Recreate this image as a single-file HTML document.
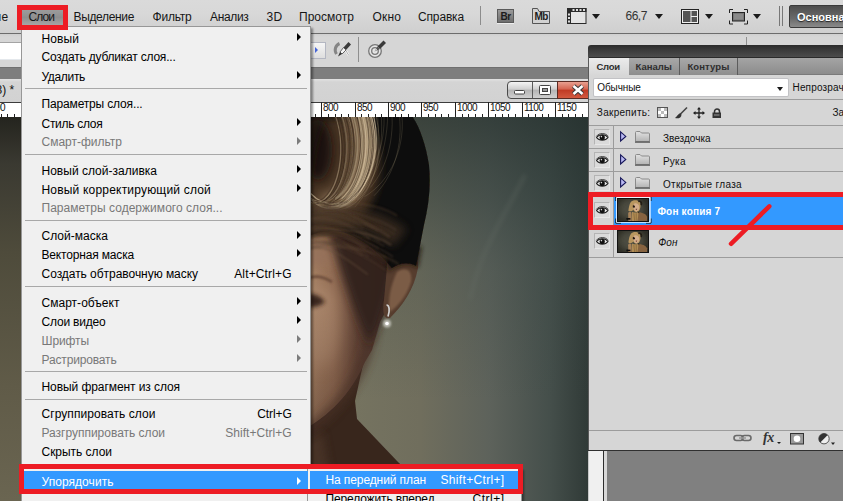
<!DOCTYPE html>
<html><head><meta charset="utf-8">
<style>
*{box-sizing:border-box;margin:0;padding:0}
html,body{width:843px;height:501px;overflow:hidden;background:#808080}
body{position:relative;font-family:"Liberation Sans",sans-serif;font-size:12px;color:#000}
.abs{position:absolute}
.t{position:absolute;white-space:nowrap}
svg{position:absolute;overflow:visible}
#menubar{left:0;top:0;width:843px;height:34px;background:linear-gradient(#dadada,#d8d8d8 40%,#cfcfcf);border-bottom:1px solid #6c6c6c}
#menubar .t{top:10px;font-size:12px;line-height:15px;color:#161616}
#optbar{left:0;top:34px;width:843px;height:33px;background:linear-gradient(#cfcfcf,#d6d6d6 3px,#d6d6d6)}
#band{left:0;top:67px;width:843px;height:12px;background:#7e7e7e;border-top:1px solid #6f6f6f}
#tabbar{left:0;top:79px;width:588px;height:23px;background:linear-gradient(#e2e2e2,#d4d4d4 3px,#d2d2d2)}
#ruler{left:0;top:102px;width:588px;height:15px;background:#fff;border-top:1px solid #3c3c3c}
#ruler .n{position:absolute;top:-0.3px;font-size:10px;line-height:10px;color:#111;letter-spacing:-0.6px}
#photo{left:0;top:117px;width:588px;height:384px;background:#3c4440;overflow:hidden}
#menu{left:21px;top:25.500px;width:290px;height:480px;background:#f0f0f0;border:1px solid #979797;box-shadow:2px 2px 2px rgba(0,0,0,.4)}
.mi{position:absolute;white-space:nowrap;font-size:12px;line-height:19px;height:19px}
.sep{position:absolute;left:3px;right:3px;height:1px;background:#a8a8a8;border-bottom:0}
.arr{position:absolute;left:275px;width:0;height:0;border-left:4px solid #000;border-top:4px solid transparent;border-bottom:4px solid transparent}
.arr.d{border-left-color:#7c7c7c}
.dd{position:absolute;width:0;height:0;border-top:5px solid #1a1a1a;border-left:4px solid transparent;border-right:4px solid transparent}
/* panel */
#panel{left:588px;top:45px;width:255px;height:406px;background:#d6d6d6;border-bottom:1px solid #303030;border-radius:3px 0 0 0;overflow:hidden}
#panel .t{font-size:10px;line-height:12px;color:#111}
#phead{left:0;top:0;width:255px;height:12px;background:linear-gradient(#2b2b2b,#3a3a3a 40%,#4c4c4c)}
#ptabs{left:0;top:12px;width:255px;height:17.600px;background:linear-gradient(#a4a4a4,#8c8c8c);border-top:1px solid #2a2a2a;border-bottom:1px solid #7a7a7a}
.ptab{position:absolute;top:0;height:17px;border-right:1px solid #5c5c5c;background:linear-gradient(#a8a8a8,#8e8e8e)}
.ptab.on{background:linear-gradient(#ebebeb,#d6d6d6);height:18px;border-right:0}
.hl{position:absolute;left:0;width:255px;height:1px;background:#9c9c9c}
.eye{position:absolute;left:5px;width:16px;height:16px;background:#dadada;border:1px solid;border-color:#b4b4b4 #e6e6e6 #e6e6e6 #b4b4b4}
.ltxt{font-size:11px}
</style></head><body>

<div id="menubar" class="abs">
<div class="t" id="mb0" style="left:-5.5px;letter-spacing:0.305px">ие</div>
<div class="abs" style="left:22px;top:10px;width:41px;height:15px;background:linear-gradient(#9c9c9c,#8e8e8e 50%,#a6a6a6)"></div>
<div class="t" id="mb1" style="left:28.5px;letter-spacing:-0.922px">Слои</div>
<div class="t" id="mb2" style="left:73.5px;letter-spacing:-0.344px">Выделение</div>
<div class="t" id="mb3" style="left:152.5px;letter-spacing:-0.219px">Фильтр</div>
<div class="t" id="mb4" style="left:210px;letter-spacing:-0.336px">Анализ</div>
<div class="t" id="mb5" style="left:266.5px;letter-spacing:0.328px">3D</div>
<div class="t" id="mb6" style="left:299px;letter-spacing:0.023px">Просмотр</div>
<div class="t" id="mb7" style="left:372.5px;letter-spacing:0.152px">Окно</div>
<div class="t" id="mb8" style="left:418px;letter-spacing:-0.154px">Справка</div>
<div class="abs" style="left:480px;top:6px;width:1px;height:19px;background:#8c8c8c"></div>
<!-- Br -->
<div class="abs" style="left:497px;top:9px;width:17px;height:14px;background:linear-gradient(#9a9a9a,#6e6e6e);border:1px solid #5a5a5a;box-shadow:0 1px 0 #eee"></div>
<div class="t" style="left:500.5px;top:9.5px;font-size:10px;line-height:13px;font-weight:bold;color:#1c1c1c;letter-spacing:-0.4px">Br</div>
<!-- Mb -->
<svg style="left:532px;top:8px" width="18" height="16"><path d="M0.5 15.5V0.5H5.5L7 3.5H17.5V15.5Z" fill="#d2d2d2" stroke="#555" stroke-width="1"/></svg>
<div class="t" style="left:534.5px;top:10px;font-size:10px;line-height:13px;font-weight:bold;color:#1c1c1c;letter-spacing:-0.6px">Mb</div>
<!-- film -->
<svg style="left:567px;top:8px" width="20" height="16"><rect x="0.5" y="0.5" width="18.5" height="15" fill="#e4e4e4" stroke="#2a2a2a"/><rect x="0" y="0" width="19.5" height="4" fill="#2a2a2a"/><rect x="0" y="0" width="4" height="16" fill="#2a2a2a"/><g fill="#ddd"><rect x="5.5" y="1" width="2" height="2"/><rect x="9" y="1" width="2" height="2"/><rect x="12.5" y="1" width="2" height="2"/><rect x="16" y="1" width="2" height="2"/><rect x="1" y="5.5" width="2" height="2"/><rect x="1" y="9" width="2" height="2"/><rect x="1" y="12.5" width="2" height="2"/></g></svg>
<div class="dd" style="left:591.5px;top:14px"></div>
<div class="t" style="left:625.5px;top:9px;font-size:12px;color:#333;letter-spacing:-0.5px">66,7</div>
<div class="dd" style="left:655px;top:14px"></div>
<!-- grid -->
<svg style="left:681px;top:8.5px" width="18" height="15"><rect x="0.5" y="0.5" width="17" height="14" fill="#f0f0f0" stroke="#222"/><rect x="2" y="2" width="7.5" height="11" fill="#555"/><rect x="10.5" y="2" width="5.5" height="5" fill="#555"/><rect x="10.5" y="8" width="5.5" height="5" fill="#555"/></svg>
<div class="dd" style="left:704.5px;top:14px"></div>
<!-- screen -->
<svg style="left:728.5px;top:8.5px" width="19" height="16"><path d="M0.5 4V0.5H4M15 0.5H18.5V4M18.5 11.5V15H15M4 15H0.5V11.5" fill="none" stroke="#222"/><rect x="3.5" y="3.5" width="12" height="8.5" fill="#777" stroke="#222"/><rect x="5" y="5" width="9" height="5.5" fill="#8a8a8a"/></svg>
<div class="dd" style="left:753px;top:14px"></div>
<div class="abs" style="left:779px;top:6px;width:1px;height:20px;background:#777"></div>
<div class="abs" style="left:782px;top:6px;width:1px;height:20px;background:#777"></div>
<div class="abs" style="left:789px;top:5px;width:60px;height:23px;background:linear-gradient(#4e4e4e,#6a6a6a 60%,#8a8a8a);border:1px solid #3a3a3a;border-radius:2px"></div>
<div class="t" style="left:797px;top:9px;font-size:11px;font-weight:bold;color:#fff;letter-spacing:0;text-shadow:0 1px 1px #222;top:10px">Основная</div>
</div>

<div id="optbar" class="abs">
<div class="abs" style="left:-2px;top:8px;width:24px;height:18px;background:#fff;border:1px solid #b4b4b4;border-top-color:#a4a4a4;border-bottom-color:#e4e8ec"></div>
<div class="abs" style="left:304px;top:7.500px;width:21.500px;height:17.500px;background:linear-gradient(#f6f6f6,#dedede);border:1.500px solid #b4b7c2"></div>
<div class="abs" style="left:315px;top:13px;width:0;height:0;border-left:3.500px solid #4665d6;border-top:3px solid transparent;border-bottom:3px solid transparent"></div>
<!-- pen icon 1 -->
<svg style="left:333px;top:7px" width="20" height="18"><path d="M6.500 2.500A7 7 0 0 0 3.500 13" fill="none" stroke="#858585" stroke-width="3"/><path d="M12 8L15.500 14" stroke="#fff" stroke-width="2"/><path d="M12 8L15.500 14" stroke="#777" stroke-width=".6"/><path d="M18 3.500L15.500 1L10.500 6.500L13 9Z" fill="#3a3a3a"/><path d="M10.500 6.500L7 11L9 13L13 9Z" fill="#f4f4f4" stroke="#444" stroke-width=".8"/><path d="M7 11L5 15.500L9 13Z" fill="#333"/></svg>
<div class="abs" style="left:358px;top:3px;width:1px;height:25px;background:#8f8f8f"></div>
<!-- target icon -->
<svg style="left:367px;top:6px" width="20" height="19"><circle cx="8" cy="11" r="6.3" fill="#e6e6e6" stroke="#777" stroke-width="1.3"/><circle cx="8" cy="11" r="3.3" fill="#e6e6e6" stroke="#777" stroke-width="1.3"/><path d="M19 3L16.500 0.500L10.500 6.500L13 9Z" fill="#3a3a3a"/><path d="M10.500 6.500L7.500 11.500L13 9Z" fill="#555"/><path d="M9.300 8.700L8 11L10 10Z" fill="#fff"/></svg>
<div class="abs" style="left:746px;top:3px;width:1px;height:10px;background:#8f8f8f"></div>
</div>
<div id="band" class="abs"></div>
<div id="tabbar" class="abs">
<div class="t" style="left:-4.5px;top:4px;font-size:12px;color:#111">8) *</div>
<!-- window buttons -->
<div class="abs" style="left:507px;top:2px;width:51px;height:18px;border:1px solid #4a4a4a;border-radius:4px 0 0 4px;background:linear-gradient(#f4f4f4,#cfcfcf 45%,#b4b4b4 50%,#d0d0d0)"></div>
<div class="abs" style="left:532px;top:3px;width:1px;height:16px;background:#5a5a5a"></div>
<div class="abs" style="left:557px;top:2px;width:31px;height:18px;border:1px solid #5a2a22;border-right:0;background:linear-gradient(#e8a090,#d46450 45%,#c03a24 50%,#d2593f)"></div>
<svg style="left:507px;top:2px" width="81" height="18"><rect x="7.5" y="9.5" width="10" height="3.5" rx="1" fill="#fff" stroke="#444" stroke-width="1"/><rect x="32.5" y="4.5" width="11" height="9" rx="1" fill="#fff" stroke="#444"/><rect x="35.5" y="7.500" width="5" height="3" fill="#999" stroke="#444"/><path d="M66.500 5L75.500 13M75.500 5L66.500 13" stroke="#3a3a3a" stroke-width="4.600"/><path d="M66.500 5L75.500 13M75.500 5L66.500 13" stroke="#fff" stroke-width="2.600"/></svg>
</div>

<div id="ruler" class="abs"><svg style="left:0;top:0" width="588" height="15" shape-rendering="crispEdges"><path d="M1.5 11V14" stroke="#222"/><path d="M7.5 11V14" stroke="#222"/><path d="M14.5 11V14" stroke="#222"/><path d="M21.5 -1V14" stroke="#222"/><path d="M27.5 11V14" stroke="#222"/><path d="M34.5 11V14" stroke="#222"/><path d="M41.5 11V14" stroke="#222"/><path d="M47.5 11V14" stroke="#222"/><path d="M54.5 -1V14" stroke="#222"/><path d="M61.5 11V14" stroke="#222"/><path d="M67.5 11V14" stroke="#222"/><path d="M74.5 11V14" stroke="#222"/><path d="M81.5 11V14" stroke="#222"/><path d="M87.5 -1V14" stroke="#222"/><path d="M94.5 11V14" stroke="#222"/><path d="M101.5 11V14" stroke="#222"/><path d="M107.5 11V14" stroke="#222"/><path d="M114.5 11V14" stroke="#222"/><path d="M121.5 -1V14" stroke="#222"/><path d="M128.5 11V14" stroke="#222"/><path d="M134.5 11V14" stroke="#222"/><path d="M141.5 11V14" stroke="#222"/><path d="M148.5 11V14" stroke="#222"/><path d="M154.5 -1V14" stroke="#222"/><path d="M161.5 11V14" stroke="#222"/><path d="M168.5 11V14" stroke="#222"/><path d="M174.5 11V14" stroke="#222"/><path d="M181.5 11V14" stroke="#222"/><path d="M188.5 -1V14" stroke="#222"/><path d="M194.5 11V14" stroke="#222"/><path d="M201.5 11V14" stroke="#222"/><path d="M208.5 11V14" stroke="#222"/><path d="M214.5 11V14" stroke="#222"/><path d="M221.5 -1V14" stroke="#222"/><path d="M228.5 11V14" stroke="#222"/><path d="M234.5 11V14" stroke="#222"/><path d="M241.5 11V14" stroke="#222"/><path d="M248.5 11V14" stroke="#222"/><path d="M254.5 -1V14" stroke="#222"/><path d="M261.5 11V14" stroke="#222"/><path d="M268.5 11V14" stroke="#222"/><path d="M274.5 11V14" stroke="#222"/><path d="M281.5 11V14" stroke="#222"/><path d="M288.5 -1V14" stroke="#222"/><path d="M295.5 11V14" stroke="#222"/><path d="M301.5 11V14" stroke="#222"/><path d="M308.5 11V14" stroke="#222"/><path d="M315.5 11V14" stroke="#222"/><path d="M321.5 -1V14" stroke="#222"/><path d="M328.5 11V14" stroke="#222"/><path d="M335.5 11V14" stroke="#222"/><path d="M341.5 11V14" stroke="#222"/><path d="M348.5 11V14" stroke="#222"/><path d="M355.5 -1V14" stroke="#222"/><path d="M361.5 11V14" stroke="#222"/><path d="M368.5 11V14" stroke="#222"/><path d="M375.5 11V14" stroke="#222"/><path d="M381.5 11V14" stroke="#222"/><path d="M388.5 -1V14" stroke="#222"/><path d="M395.5 11V14" stroke="#222"/><path d="M401.5 11V14" stroke="#222"/><path d="M408.5 11V14" stroke="#222"/><path d="M415.5 11V14" stroke="#222"/><path d="M421.5 -1V14" stroke="#222"/><path d="M428.5 11V14" stroke="#222"/><path d="M435.5 11V14" stroke="#222"/><path d="M441.5 11V14" stroke="#222"/><path d="M448.5 11V14" stroke="#222"/><path d="M455.5 -1V14" stroke="#222"/><path d="M462.5 11V14" stroke="#222"/><path d="M468.5 11V14" stroke="#222"/><path d="M475.5 11V14" stroke="#222"/><path d="M482.5 11V14" stroke="#222"/><path d="M488.5 -1V14" stroke="#222"/><path d="M495.5 11V14" stroke="#222"/><path d="M502.5 11V14" stroke="#222"/><path d="M508.5 11V14" stroke="#222"/><path d="M515.5 11V14" stroke="#222"/><path d="M522.5 -1V14" stroke="#222"/><path d="M528.5 11V14" stroke="#222"/><path d="M535.5 11V14" stroke="#222"/><path d="M542.5 11V14" stroke="#222"/><path d="M548.5 11V14" stroke="#222"/><path d="M555.5 -1V14" stroke="#222"/><path d="M562.5 11V14" stroke="#222"/><path d="M568.5 11V14" stroke="#222"/><path d="M575.5 11V14" stroke="#222"/><path d="M582.5 11V14" stroke="#222"/></svg><span class="n" style="left:-10.0px">300</span><span class="n" style="left:23.0px">350</span><span class="n" style="left:56.0px">400</span><span class="n" style="left:89.0px">450</span><span class="n" style="left:123.0px">500</span><span class="n" style="left:156.0px">550</span><span class="n" style="left:190.0px">600</span><span class="n" style="left:223.0px">650</span><span class="n" style="left:256.0px">700</span><span class="n" style="left:290.0px">750</span><span class="n" style="left:323.0px">800</span><span class="n" style="left:357.0px">850</span><span class="n" style="left:390.0px">900</span><span class="n" style="left:423.0px">950</span><span class="n" style="left:457.0px">1000</span><span class="n" style="left:490.0px">1050</span><span class="n" style="left:524.0px">1100</span><span class="n" style="left:557.0px">1150</span></div>
<div id="photo" class="abs">
<svg style="left:0;top:0" width="588" height="384" viewBox="0 117 588 384">
<defs>
<linearGradient id="bgh" x1="330" y1="0" x2="588" y2="0" gradientUnits="userSpaceOnUse"><stop offset="0" stop-color="#777561"/><stop offset=".35" stop-color="#706e5d"/><stop offset=".62" stop-color="#5d625b"/><stop offset=".85" stop-color="#454f4b"/><stop offset="1" stop-color="#303a37"/></linearGradient>
<linearGradient id="bgt" x1="0" y1="117" x2="0" y2="400" gradientUnits="userSpaceOnUse"><stop offset="0" stop-color="#25312f" stop-opacity=".72"/><stop offset=".3" stop-color="#2e3c3a" stop-opacity=".48"/><stop offset=".55" stop-color="#3a4845" stop-opacity=".25"/><stop offset="1" stop-color="#3a4845" stop-opacity="0"/></linearGradient>
<linearGradient id="lst" x1="0" y1="117" x2="0" y2="501" gradientUnits="userSpaceOnUse"><stop offset="0" stop-color="#24241e"/><stop offset=".12" stop-color="#3a3931"/><stop offset=".35" stop-color="#4e4b3b"/><stop offset=".7" stop-color="#605b48"/><stop offset="1" stop-color="#6a6551"/></linearGradient>
<linearGradient id="skin" x1="311" y1="0" x2="385" y2="0" gradientUnits="userSpaceOnUse"><stop offset="0" stop-color="#a58063"/><stop offset=".3" stop-color="#8f6a52"/><stop offset=".62" stop-color="#5f4235"/><stop offset="1" stop-color="#43302a"/></linearGradient>
<linearGradient id="fsh" x1="0" y1="300" x2="0" y2="435" gradientUnits="userSpaceOnUse"><stop offset="0" stop-color="#4a3228" stop-opacity="0"/><stop offset=".5" stop-color="#4a3228" stop-opacity=".18"/><stop offset="1" stop-color="#3e2a21" stop-opacity=".45"/></linearGradient>
<filter id="b05" filterUnits="userSpaceOnUse" x="-20" y="90" width="640" height="440"><feGaussianBlur stdDeviation=".6"/></filter>
<filter id="b1" filterUnits="userSpaceOnUse" x="-20" y="90" width="640" height="440"><feGaussianBlur stdDeviation="1.2"/></filter>
<filter id="b2" filterUnits="userSpaceOnUse" x="-20" y="90" width="640" height="440"><feGaussianBlur stdDeviation="2.2"/></filter>
<filter id="b4" filterUnits="userSpaceOnUse" x="-20" y="90" width="640" height="440"><feGaussianBlur stdDeviation="4"/></filter>
<filter id="b8" filterUnits="userSpaceOnUse" x="-20" y="90" width="640" height="440"><feGaussianBlur stdDeviation="8"/></filter>
</defs>
<rect x="0" y="117" width="588" height="384" fill="url(#bgh)"/>
<rect x="0" y="117" width="588" height="384" fill="url(#bgt)"/>
<path d="M525 175C505 215 480 250 470 300" stroke="#6a726a" stroke-width="4" fill="none" opacity=".25" filter="url(#b2)"/>
<rect x="0" y="117" width="30" height="384" fill="url(#lst)"/>
<path d="M300 380L366 352L360 378L355 401L357 419L398 462L440 501L300 501Z" fill="#38261d" filter="url(#b05)"/>
<path d="M300 445L322 432L330 475L300 480Z" fill="#4e372b" opacity=".7" filter="url(#b4)"/>
<path d="M300 225L395 240L392 300L380 322L372 350L365 362C350 395 330 415 300 432Z" fill="url(#skin)" filter="url(#b05)"/>
<ellipse cx="320" cy="325" rx="20" ry="42" fill="#b08d72" opacity=".6" filter="url(#b8)"/>
<ellipse cx="316" cy="252" rx="18" ry="16" fill="#94705a" opacity=".7" filter="url(#b4)"/>
<path d="M300 225L395 240L392 300L380 322L372 350L365 362C350 395 330 415 300 432Z" fill="url(#fsh)"/>
<path d="M372 330C366 372 340 410 305 432" stroke="#4a3026" stroke-width="10" fill="none" opacity=".7" filter="url(#b4)"/>
<path d="M328 230L402 236L396 262L387 300L379 326L369 344L360 324L351 300L343 277Z" fill="#33241e" opacity=".95" filter="url(#b4)"/>
<path d="M388 256C402 246 420 248 418 268C414 290 402 306 390 318C384 320 382 312 384 300Z" fill="#573c2f" filter="url(#b05)"/>
<path d="M397 272C405 266 413 270 411 282C407 296 398 306 390 312C387 302 391 284 397 272Z" fill="#80604a" opacity=".9" filter="url(#b1)"/>
<path d="M386 250L422 246L418 268C408 262 398 264 388 272Z" fill="#1c1410" opacity=".8" filter="url(#b2)"/>
<path d="M300 117L412.800 117C420 128 426 145 429 165C431 185 429 205 424 225C421 240 419 252 416 266C410 262 400 262 392 268C380 254 365 240 345 233C330 229 315 232 300 240Z" fill="#0e0b09" filter="url(#b05)"/>
<path d="M305 122C330 114 368 116 378 148C384 186 372 216 342 230C325 234 312 234 305 238Z" fill="#443323" filter="url(#b4)"/>
<path d="M337.3 88.6 L341.9 92.4 L346.1 97.4 L349.8 103.5 L353.0 110.6 L355.6 118.5 L357.5 127.0 L358.6 135.9 L359.0 145.0 L358.6 154.1 L357.5 163.0 L355.6 171.5 L353.0 179.4 L349.8 186.5 L346.1 192.6 L341.9 197.6 L337.3 201.4 L332.4 203.8 L327.4 204.9 L322.4 204.6 L317.5 203.0" stroke="#7a6248" stroke-width="26" fill="none" opacity=".85" filter="url(#b4)"/>
<path d="M351.2 90.4 L354.4 94.6 L357.3 99.4 L359.8 104.7 L362.0 110.5 L363.9 116.6 L365.3 123.1 L366.3 129.7 L366.9 136.5 L367.0 143.4 L366.7 150.2 L365.9 157.0 L364.8 163.5 L363.2 169.9 L361.2 175.8 L358.9 181.4 L356.2 186.5 L353.2 191.1 L349.9 195.1 L346.4 198.5 L342.7 201.2" stroke="#b9a17e" stroke-width="13" fill="none" opacity=".75" filter="url(#b2)"/>
<path d="M334.6 96.9 L337.4 100.2 L340.0 104.0 L342.4 108.3 L344.5 113.2 L346.3 118.4 L347.8 124.0 L349.0 129.8 L349.8 135.9 L350.3 142.1 L350.4 148.4 L350.2 154.7 L349.6 160.8 L348.6 166.8 L347.3 172.6 L345.7 178.1 L343.8 183.2 L341.6 187.9 L339.2 192.1 L336.5 195.7 L333.7 198.8" stroke="rgb(64, 48, 34)" stroke-width="0.6" fill="none" opacity="0.49" filter="url(#b05)"/>
<path d="M331.5 86.2 L335.5 88.8 L339.2 92.4 L342.7 96.8 L345.8 102.1 L348.6 108.0 L350.9 114.5 L352.7 121.6 L354.0 129.0 L354.8 136.6 L355.0 144.4 L354.7 152.2 L353.9 159.8 L352.5 167.2 L350.7 174.2 L348.3 180.6 L345.5 186.5 L342.4 191.7 L338.9 196.0 L335.1 199.5 L331.1 202.1" stroke="rgb(175, 156, 127)" stroke-width="1.4" fill="none" opacity="0.53" filter="url(#b05)"/>
<path d="M340.5 89.1 L344.1 92.5 L347.4 96.7 L350.5 101.6 L353.2 107.1 L355.5 113.1 L357.5 119.6 L359.0 126.5 L360.0 133.6 L360.6 140.9 L360.7 148.2 L360.3 155.6 L359.5 162.8 L358.2 169.8 L356.4 176.4 L354.3 182.7 L351.7 188.4 L348.8 193.5 L345.6 198.0 L342.1 201.8 L338.4 204.8" stroke="rgb(51, 37, 25)" stroke-width="0.8" fill="none" opacity="0.41" filter="url(#b05)"/>
<path d="M354.6 90.9 L357.7 95.1 L360.6 99.9 L363.1 105.0 L365.2 110.6 L367.0 116.5 L368.5 122.6 L369.5 129.0 L370.1 135.5 L370.3 142.1 L370.1 148.6 L369.5 155.1 L368.5 161.5 L367.1 167.6 L365.3 173.5 L363.1 179.1 L360.6 184.3 L357.8 189.0 L354.7 193.3 L351.4 197.1 L347.8 200.2" stroke="rgb(49, 36, 24)" stroke-width="0.8" fill="none" opacity="0.41" filter="url(#b05)"/>
<path d="M344.2 85.6 L349.2 90.4 L353.7 96.3 L357.7 103.4 L360.9 111.4 L363.4 120.1 L365.0 129.4 L365.8 139.0 L365.6 148.6 L364.6 158.1 L362.8 167.3 L360.1 175.8 L356.6 183.6 L352.5 190.3 L347.9 196.0 L342.7 200.4 L337.2 203.4 L331.6 204.9 L325.8 205.0 L320.1 203.6 L314.6 200.7" stroke="rgb(190, 170, 140)" stroke-width="0.8" fill="none" opacity="0.59" filter="url(#b05)"/>
<path d="M357.3 114.7 L358.7 119.2 L360.0 124.0 L360.9 128.9 L361.7 134.0 L362.1 139.1 L362.4 144.3 L362.3 149.5 L362.0 154.6 L361.4 159.7 L360.5 164.7 L359.4 169.6 L358.1 174.3 L356.5 178.7 L354.7 183.0 L352.7 186.9 L350.5 190.6 L348.2 193.9 L345.6 196.8 L343.0 199.4 L340.2 201.6" stroke="rgb(65, 49, 34)" stroke-width="1.2" fill="none" opacity="0.50" filter="url(#b05)"/>
<path d="M335.5 103.3 L338.6 108.8 L341.1 115.2 L343.2 122.2 L344.8 129.8 L345.7 137.7 L346.1 145.8 L345.8 153.9 L345.0 161.9 L343.6 169.5 L341.6 176.7 L339.1 183.2 L336.2 188.9 L332.9 193.7 L329.2 197.5 L325.3 200.2 L321.3 201.7 L317.2 202.1 L313.1 201.3 L309.1 199.3 L305.3 196.1" stroke="rgb(54, 39, 27)" stroke-width="1.2" fill="none" opacity="0.43" filter="url(#b05)"/>
<path d="M347.3 91.2 L351.3 96.6 L354.9 102.9 L357.9 110.0 L360.3 117.7 L362.0 126.0 L363.1 134.6 L363.5 143.3 L363.2 152.1 L362.2 160.8 L360.5 169.1 L358.2 176.9 L355.2 184.0 L351.8 190.4 L347.8 195.9 L343.5 200.4 L338.8 203.8 L333.9 206.1 L328.9 207.1 L323.8 206.9 L318.8 205.5" stroke="rgb(48, 34, 23)" stroke-width="1.2" fill="none" opacity="0.40" filter="url(#b05)"/>
<path d="M354.3 99.9 L356.7 104.1 L358.8 108.6 L360.7 113.5 L362.3 118.7 L363.5 124.1 L364.5 129.7 L365.2 135.4 L365.6 141.2 L365.6 147.0 L365.3 152.8 L364.7 158.6 L363.8 164.2 L362.6 169.7 L361.1 174.9 L359.3 179.8 L357.2 184.5 L354.9 188.8 L352.4 192.7 L349.6 196.2 L346.7 199.2" stroke="rgb(171, 152, 123)" stroke-width="0.7" fill="none" opacity="0.52" filter="url(#b05)"/>
<path d="M329.0 103.9 L332.4 108.5 L335.4 114.0 L337.9 120.4 L339.9 127.5 L341.3 135.2 L342.2 143.2 L342.4 151.3 L342.0 159.4 L340.9 167.3 L339.3 174.8 L337.1 181.7 L334.4 187.8 L331.3 193.0 L327.8 197.2 L324.0 200.3 L320.0 202.1 L316.0 202.8 L311.9 202.1 L308.0 200.2 L304.2 197.2" stroke="rgb(46, 33, 22)" stroke-width="1.0" fill="none" opacity="0.39" filter="url(#b05)"/>
<path d="M345.4 94.3 L349.0 98.5 L352.3 103.4 L355.3 109.0 L357.8 115.2 L359.8 121.8 L361.3 128.8 L362.3 136.1 L362.7 143.5 L362.6 150.9 L362.0 158.3 L360.8 165.5 L359.1 172.3 L356.9 178.8 L354.2 184.7 L351.1 190.1 L347.7 194.7 L343.9 198.6 L339.9 201.7 L335.6 204.0 L331.3 205.3" stroke="rgb(197, 178, 146)" stroke-width="1.4" fill="none" opacity="0.62" filter="url(#b05)"/>
<path d="M334.3 105.5 L336.5 109.5 L338.5 114.1 L340.2 119.1 L341.7 124.4 L342.8 130.0 L343.6 135.9 L344.1 141.9 L344.2 147.9 L344.0 153.9 L343.5 159.9 L342.6 165.7 L341.5 171.3 L340.0 176.6 L338.2 181.5 L336.2 186.0 L333.9 190.0 L331.5 193.5 L328.8 196.4 L326.0 198.7 L323.1 200.4" stroke="rgb(43, 31, 20)" stroke-width="0.9" fill="none" opacity="0.37" filter="url(#b05)"/>
<path d="M343.5 104.3 L346.6 109.7 L349.2 115.9 L351.3 122.6 L353.0 129.7 L354.0 137.2 L354.6 144.9 L354.5 152.6 L353.9 160.3 L352.7 167.7 L351.0 174.8 L348.8 181.4 L346.1 187.5 L343.0 192.8 L339.5 197.3 L335.8 200.9 L331.8 203.7 L327.6 205.4 L323.3 206.1 L319.1 205.7 L314.9 204.4" stroke="rgb(46, 33, 22)" stroke-width="1.3" fill="none" opacity="0.39" filter="url(#b05)"/>
<path d="M341.9 81.6 L347.5 84.8 L352.7 89.5 L357.5 95.5 L361.6 102.5 L365.1 110.6 L367.7 119.4 L369.5 128.8 L370.4 138.5 L370.4 148.3 L369.5 158.0 L367.7 167.4 L365.1 176.2 L361.6 184.2 L357.5 191.3 L352.7 197.3 L347.5 201.9 L341.9 205.2 L336.0 207.1 L330.1 207.4 L324.2 206.2" stroke="rgb(49, 35, 24)" stroke-width="0.7" fill="none" opacity="0.40" filter="url(#b05)"/>
<path d="M326.6 96.4 L329.7 98.7 L332.7 101.8 L335.5 105.5 L338.0 109.8 L340.2 114.7 L342.1 120.0 L343.7 125.8 L344.8 131.8 L345.6 138.1 L346.0 144.6 L346.0 151.0 L345.5 157.4 L344.7 163.7 L343.4 169.7 L341.8 175.4 L339.9 180.7 L337.6 185.5 L335.0 189.7 L332.2 193.3 L329.2 196.2" stroke="rgb(56, 41, 29)" stroke-width="0.6" fill="none" opacity="0.45" filter="url(#b05)"/>
<path d="M351.9 82.2 L355.7 86.1 L359.3 90.6 L362.6 95.8 L365.5 101.6 L367.9 107.8 L369.9 114.5 L371.4 121.4 L372.5 128.6 L373.0 136.0 L373.0 143.4 L372.5 150.7 L371.5 158.0 L370.0 164.9 L368.0 171.6 L365.6 177.9 L362.7 183.6 L359.5 188.8 L355.9 193.4 L352.0 197.3 L347.9 200.5" stroke="rgb(210, 190, 158)" stroke-width="1.4" fill="none" opacity="0.67" filter="url(#b05)"/>
<path d="M337.1 89.6 L341.7 93.9 L345.8 99.5 L349.4 106.1 L352.3 113.7 L354.6 122.0 L356.1 130.9 L356.8 140.1 L356.7 149.3 L355.8 158.4 L354.1 167.2 L351.7 175.4 L348.6 182.8 L344.9 189.2 L340.7 194.5 L336.1 198.5 L331.2 201.2 L326.1 202.4 L321.0 202.2 L315.9 200.5 L311.1 197.5" stroke="rgb(52, 38, 25)" stroke-width="0.6" fill="none" opacity="0.42" filter="url(#b05)"/>
<path d="M359.2 86.5 L364.1 93.1 L368.3 100.8 L371.7 109.4 L374.2 118.7 L375.8 128.5 L376.3 138.6 L375.9 148.6 L374.4 158.5 L372.0 167.9 L368.7 176.5 L364.5 184.3 L359.7 191.1 L354.2 196.5 L348.2 200.6 L341.9 203.3 L335.5 204.4 L328.9 203.9 L322.6 201.9 L316.4 198.4 L310.7 193.5" stroke="rgb(215, 195, 162)" stroke-width="1.2" fill="none" opacity="0.69" filter="url(#b05)"/>
<path d="M342.6 109.1 L344.6 113.8 L346.3 118.9 L347.7 124.3 L348.8 130.0 L349.6 135.9 L350.0 141.8 L350.1 147.8 L349.8 153.8 L349.2 159.7 L348.2 165.5 L346.9 171.0 L345.3 176.3 L343.5 181.2 L341.3 185.7 L338.9 189.7 L336.3 193.2 L333.5 196.3 L330.6 198.7 L327.5 200.5 L324.3 201.7" stroke="rgb(52, 38, 26)" stroke-width="1.2" fill="none" opacity="0.42" filter="url(#b05)"/>
<path d="M351.5 77.4 L357.1 81.5 L362.2 86.9 L366.8 93.4 L370.8 100.8 L374.0 109.0 L376.5 117.9 L378.2 127.3 L379.0 136.9 L379.0 146.6 L378.1 156.2 L376.3 165.6 L373.8 174.4 L370.5 182.6 L366.4 189.9 L361.8 196.3 L356.7 201.6 L351.1 205.7 L345.2 208.4 L339.1 209.9 L333.0 210.0" stroke="rgb(171, 152, 123)" stroke-width="0.6" fill="none" opacity="0.52" filter="url(#b05)"/>
<path d="M328.8 102.9 L332.0 108.0 L334.8 114.0 L337.1 120.9 L338.9 128.5 L340.1 136.5 L340.7 144.9 L340.7 153.3 L340.0 161.7 L338.8 169.7 L336.9 177.2 L334.6 184.0 L331.7 190.0 L328.5 195.0 L324.9 198.8 L321.0 201.5 L317.1 202.8 L313.0 202.9 L309.1 201.6 L305.2 199.1 L301.6 195.3" stroke="rgb(176, 157, 127)" stroke-width="1.4" fill="none" opacity="0.53" filter="url(#b05)"/>
<path d="M341.8 102.6 L345.0 108.5 L347.7 115.2 L349.8 122.5 L351.3 130.3 L352.2 138.4 L352.4 146.6 L352.0 154.9 L350.9 162.9 L349.2 170.5 L346.9 177.6 L344.0 184.1 L340.7 189.7 L337.0 194.3 L332.9 197.9 L328.6 200.4 L324.1 201.7 L319.6 201.8 L315.1 200.7 L310.8 198.4 L306.7 195.0" stroke="rgb(185, 166, 136)" stroke-width="1.0" fill="none" opacity="0.57" filter="url(#b05)"/>
<path d="M357.0 99.9 L359.9 106.5 L362.3 113.8 L364.1 121.5 L365.4 129.6 L366.0 137.9 L365.9 146.3 L365.3 154.6 L364.0 162.6 L362.2 170.4 L359.7 177.6 L356.8 184.2 L353.3 190.1 L349.5 195.2 L345.3 199.3 L340.8 202.5 L336.1 204.7 L331.3 205.8 L326.5 205.8 L321.7 204.7 L317.0 202.5" stroke="rgb(172, 154, 124)" stroke-width="0.7" fill="none" opacity="0.52" filter="url(#b05)"/>
<path d="M350.4 87.7 L355.6 93.5 L360.2 100.5 L364.1 108.6 L367.1 117.6 L369.1 127.2 L370.2 137.2 L370.3 147.3 L369.5 157.4 L367.6 167.1 L364.8 176.2 L361.1 184.5 L356.6 191.7 L351.5 197.8 L345.9 202.5 L339.9 205.7 L333.6 207.3 L327.3 207.3 L321.0 205.8 L314.9 202.6 L309.3 198.0" stroke="rgb(196, 177, 145)" stroke-width="0.7" fill="none" opacity="0.62" filter="url(#b05)"/>
<path d="M338.3 117.5 L340.5 123.6 L342.3 130.3 L343.5 137.3 L344.2 144.7 L344.4 152.1 L344.0 159.5 L343.0 166.8 L341.5 173.6 L339.5 180.1 L337.1 185.9 L334.2 191.0 L331.0 195.3 L327.4 198.7 L323.7 201.2 L319.8 202.6 L315.9 203.0 L312.0 202.3 L308.1 200.5 L304.4 197.8 L301.0 194.1" stroke="rgb(65, 48, 34)" stroke-width="0.9" fill="none" opacity="0.49" filter="url(#b05)"/>
<path d="M346.1 93.1 L350.2 99.2 L353.8 106.3 L356.6 114.2 L358.8 122.8 L360.1 131.8 L360.7 141.1 L360.4 150.4 L359.3 159.6 L357.4 168.3 L354.7 176.5 L351.4 183.8 L347.4 190.2 L343.0 195.5 L338.1 199.6 L332.9 202.4 L327.5 203.8 L322.0 203.8 L316.7 202.3 L311.5 199.5 L306.6 195.4" stroke="rgb(65, 49, 34)" stroke-width="1.3" fill="none" opacity="0.50" filter="url(#b05)"/>
<path d="M355.7 91.1 L358.9 95.9 L361.8 101.3 L364.3 107.2 L366.4 113.4 L368.0 120.1 L369.2 126.9 L369.9 134.0 L370.1 141.1 L369.8 148.2 L369.1 155.3 L367.9 162.1 L366.2 168.7 L364.0 175.0 L361.5 180.8 L358.6 186.1 L355.3 190.9 L351.7 195.0 L347.9 198.5 L343.8 201.2 L339.6 203.2" stroke="rgb(173, 154, 124)" stroke-width="0.7" fill="none" opacity="0.52" filter="url(#b05)"/>
<path d="M354.2 82.3 L359.4 88.5 L364.1 95.9 L367.9 104.4 L370.9 113.8 L373.0 123.9 L374.1 134.3 L374.2 145.0 L373.3 155.5 L371.4 165.6 L368.6 175.2 L364.9 183.9 L360.5 191.6 L355.3 198.0 L349.6 203.0 L343.5 206.6 L337.2 208.5 L330.7 208.8 L324.3 207.5 L318.1 204.5 L312.2 200.0" stroke="rgb(182, 163, 133)" stroke-width="1.0" fill="none" opacity="0.56" filter="url(#b05)"/>
<path d="M349.9 107.0 L351.9 111.5 L353.6 116.3 L355.0 121.4 L356.2 126.7 L357.0 132.2 L357.6 137.7 L357.8 143.4 L357.7 149.1 L357.3 154.7 L356.6 160.2 L355.5 165.6 L354.2 170.8 L352.6 175.7 L350.7 180.3 L348.6 184.6 L346.2 188.6 L343.6 192.1 L340.9 195.1 L338.0 197.7 L334.9 199.8" stroke="rgb(168, 150, 120)" stroke-width="1.2" fill="none" opacity="0.51" filter="url(#b05)"/>
<path d="M334.9 84.7 L339.8 87.8 L344.4 92.1 L348.6 97.7 L352.3 104.2 L355.4 111.7 L357.9 119.9 L359.6 128.7 L360.5 137.8 L360.7 147.0 L360.1 156.2 L358.7 165.1 L356.6 173.6 L353.8 181.4 L350.4 188.4 L346.4 194.5 L342.0 199.4 L337.2 203.1 L332.1 205.5 L326.9 206.5 L321.7 206.2" stroke="rgb(57, 42, 29)" stroke-width="0.8" fill="none" opacity="0.45" filter="url(#b05)"/>
<path d="M351.5 86.6 L355.8 92.0 L359.7 98.3 L363.1 105.4 L365.8 113.3 L367.9 121.7 L369.2 130.4 L369.8 139.5 L369.7 148.5 L368.9 157.5 L367.3 166.2 L365.0 174.4 L362.1 182.0 L358.5 188.9 L354.5 194.9 L349.9 199.9 L345.1 203.8 L339.9 206.6 L334.6 208.2 L329.1 208.5 L323.7 207.6" stroke="rgb(178, 159, 129)" stroke-width="1.0" fill="none" opacity="0.54" filter="url(#b05)"/>
<path d="M355.2 97.3 L358.6 104.2 L361.5 111.9 L363.7 120.2 L365.2 129.0 L366.0 138.1 L366.1 147.2 L365.4 156.3 L363.9 165.1 L361.8 173.5 L359.0 181.3 L355.6 188.3 L351.7 194.4 L347.3 199.5 L342.5 203.5 L337.5 206.3 L332.3 207.8 L327.0 208.0 L321.7 206.9 L316.6 204.6 L311.7 201.0" stroke="rgb(208, 189, 156)" stroke-width="0.8" fill="none" opacity="0.67" filter="url(#b05)"/>
<path d="M345.8 95.4 L348.8 99.1 L351.5 103.3 L354.0 108.0 L356.2 113.1 L358.1 118.6 L359.6 124.4 L360.7 130.4 L361.5 136.6 L361.8 142.9 L361.8 149.3 L361.4 155.6 L360.6 161.8 L359.4 167.8 L357.9 173.6 L356.0 179.1 L353.8 184.1 L351.2 188.8 L348.4 192.9 L345.4 196.5 L342.2 199.5" stroke="rgb(56, 41, 29)" stroke-width="0.7" fill="none" opacity="0.45" filter="url(#b05)"/>
<path d="M354.0 98.4 L356.6 103.0 L358.9 108.1 L360.9 113.5 L362.5 119.3 L363.8 125.3 L364.8 131.6 L365.4 137.9 L365.6 144.4 L365.4 150.8 L364.9 157.2 L364.0 163.4 L362.8 169.5 L361.2 175.3 L359.2 180.8 L357.0 185.9 L354.5 190.7 L351.7 194.9 L348.7 198.6 L345.5 201.8 L342.1 204.4" stroke="rgb(203, 183, 151)" stroke-width="1.4" fill="none" opacity="0.64" filter="url(#b05)"/>
<path d="M343.4 111.7 L345.0 116.2 L346.4 120.9 L347.6 125.8 L348.5 131.0 L349.1 136.3 L349.5 141.7 L349.7 147.1 L349.6 152.6 L349.2 158.0 L348.5 163.3 L347.7 168.5 L346.5 173.4 L345.2 178.2 L343.6 182.6 L341.8 186.8 L339.8 190.6 L337.7 194.0 L335.4 197.0 L333.0 199.5 L330.4 201.6" stroke="rgb(59, 44, 30)" stroke-width="1.0" fill="none" opacity="0.46" filter="url(#b05)"/>
<path d="M340.2 102.0 L343.1 106.5 L345.7 111.6 L347.9 117.2 L349.7 123.2 L351.0 129.6 L351.9 136.2 L352.4 143.0 L352.3 149.8 L351.8 156.6 L350.8 163.2 L349.4 169.5 L347.5 175.5 L345.3 181.0 L342.6 186.0 L339.7 190.4 L336.4 194.2 L332.9 197.2 L329.3 199.4 L325.5 200.8 L321.6 201.4" stroke="rgb(45, 32, 21)" stroke-width="0.9" fill="none" opacity="0.38" filter="url(#b05)"/>
<path d="M359.3 109.1 L360.8 113.8 L362.1 118.8 L363.2 123.9 L363.9 129.1 L364.4 134.5 L364.7 139.9 L364.7 145.3 L364.4 150.7 L363.8 156.0 L363.0 161.2 L361.9 166.3 L360.5 171.2 L358.9 175.9 L357.1 180.3 L355.1 184.5 L352.8 188.3 L350.4 191.8 L347.8 195.0 L345.0 197.7 L342.2 200.1" stroke="rgb(58, 43, 30)" stroke-width="0.6" fill="none" opacity="0.46" filter="url(#b05)"/>
<path d="M360.1 99.1 L362.4 104.5 L364.4 110.2 L366.0 116.3 L367.3 122.6 L368.2 129.2 L368.6 135.8 L368.7 142.5 L368.4 149.1 L367.7 155.7 L366.7 162.1 L365.2 168.3 L363.4 174.2 L361.2 179.8 L358.8 185.0 L356.0 189.7 L352.9 194.0 L349.7 197.6 L346.2 200.8 L342.5 203.2 L338.8 205.1" stroke="rgb(54, 39, 27)" stroke-width="1.3" fill="none" opacity="0.43" filter="url(#b05)"/>
<path d="M344.9 89.8 L347.9 93.5 L350.7 97.8 L353.3 102.7 L355.5 108.0 L357.4 113.7 L359.0 119.8 L360.1 126.1 L360.9 132.6 L361.3 139.2 L361.4 145.9 L361.0 152.5 L360.2 159.0 L359.0 165.3 L357.5 171.4 L355.6 177.1 L353.3 182.4 L350.8 187.3 L348.0 191.7 L345.0 195.4 L341.7 198.6" stroke="rgb(202, 182, 150)" stroke-width="1.1" fill="none" opacity="0.64" filter="url(#b05)"/>
<path d="M350.6 87.6 L354.4 92.4 L357.8 97.9 L360.8 104.1 L363.4 110.8 L365.4 118.1 L366.9 125.7 L367.9 133.6 L368.3 141.6 L368.2 149.6 L367.5 157.6 L366.2 165.4 L364.4 172.8 L362.0 179.8 L359.2 186.2 L356.0 192.0 L352.4 197.1 L348.4 201.5 L344.2 204.9 L339.7 207.5 L335.1 209.0" stroke="rgb(183, 164, 133)" stroke-width="1.3" fill="none" opacity="0.56" filter="url(#b05)"/>
<path d="M328.3 95.4 L331.5 97.8 L334.6 100.8 L337.4 104.5 L340.0 108.8 L342.3 113.6 L344.3 118.9 L345.9 124.6 L347.1 130.7 L348.0 136.9 L348.5 143.3 L348.5 149.8 L348.2 156.2 L347.4 162.5 L346.3 168.6 L344.8 174.4 L342.9 179.8 L340.7 184.7 L338.2 189.2 L335.4 193.1 L332.4 196.3" stroke="rgb(51, 37, 25)" stroke-width="0.8" fill="none" opacity="0.42" filter="url(#b05)"/>
<path d="M335.9 96.7 L338.7 99.8 L341.4 103.4 L343.8 107.4 L345.9 112.0 L347.8 116.9 L349.4 122.2 L350.7 127.7 L351.6 133.5 L352.1 139.4 L352.4 145.4 L352.2 151.4 L351.7 157.3 L350.9 163.1 L349.7 168.7 L348.2 174.1 L346.4 179.1 L344.3 183.7 L342.0 187.9 L339.4 191.6 L336.6 194.8" stroke="rgb(54, 39, 27)" stroke-width="0.6" fill="none" opacity="0.43" filter="url(#b05)"/>
<path d="M339.9 78.3 L345.8 82.0 L351.2 87.2 L356.1 93.9 L360.2 101.9 L363.6 111.0 L366.0 120.9 L367.5 131.3 L368.0 142.0 L367.4 152.7 L365.8 163.0 L363.3 172.8 L359.8 181.8 L355.6 189.7 L350.7 196.2 L345.2 201.4 L339.3 204.9 L333.1 206.6 L326.9 206.7 L320.7 205.0 L314.8 201.6" stroke="rgb(171, 152, 123)" stroke-width="1.0" fill="none" opacity="0.52" filter="url(#b05)"/>
<path d="M349.8 81.8 L355.1 87.2 L359.9 94.0 L363.9 101.8 L367.2 110.6 L369.7 120.2 L371.2 130.3 L371.8 140.6 L371.4 151.0 L370.1 161.1 L367.8 170.8 L364.7 179.8 L360.8 187.8 L356.2 194.8 L351.0 200.5 L345.3 204.8 L339.3 207.7 L333.1 208.9 L326.9 208.5 L320.7 206.6 L314.9 203.1" stroke="rgb(196, 177, 146)" stroke-width="1.1" fill="none" opacity="0.62" filter="url(#b05)"/>
<path d="M345.7 105.5 L347.8 110.0 L349.7 114.9 L351.2 120.2 L352.5 125.7 L353.4 131.3 L353.9 137.2 L354.2 143.1 L354.1 149.0 L353.6 154.9 L352.8 160.6 L351.7 166.2 L350.3 171.5 L348.6 176.5 L346.5 181.2 L344.3 185.5 L341.8 189.3 L339.0 192.7 L336.1 195.5 L333.1 197.7 L329.9 199.4" stroke="rgb(51, 37, 25)" stroke-width="0.7" fill="none" opacity="0.42" filter="url(#b05)"/>
<path d="M349.5 83.7 L354.2 87.9 L358.6 93.0 L362.4 99.1 L365.7 106.0 L368.5 113.5 L370.5 121.5 L371.9 130.0 L372.6 138.6 L372.5 147.3 L371.7 155.9 L370.2 164.3 L368.1 172.3 L365.2 179.7 L361.8 186.5 L357.9 192.4 L353.5 197.4 L348.7 201.4 L343.7 204.3 L338.4 206.1 L333.0 206.7" stroke="rgb(55, 40, 28)" stroke-width="1.0" fill="none" opacity="0.44" filter="url(#b05)"/>
<path d="M347.0 120.2 L348.4 125.0 L349.6 129.9 L350.5 135.0 L351.1 140.3 L351.4 145.6 L351.5 151.0 L351.2 156.4 L350.7 161.7 L349.9 166.9 L348.9 171.9 L347.5 176.7 L346.0 181.2 L344.2 185.4 L342.2 189.3 L340.0 192.8 L337.6 195.9 L335.0 198.6 L332.4 200.8 L329.6 202.4 L326.8 203.6" stroke="rgb(57, 42, 29)" stroke-width="0.6" fill="none" opacity="0.45" filter="url(#b05)"/>
<path d="M328.1 89.0 L332.3 90.9 L336.2 93.9 L339.9 97.9 L343.3 102.8 L346.3 108.4 L348.9 114.8 L350.9 121.8 L352.5 129.2 L353.4 137.0 L353.8 144.9 L353.6 152.8 L352.8 160.7 L351.5 168.2 L349.6 175.3 L347.2 181.9 L344.4 187.9 L341.1 193.0 L337.5 197.3 L333.6 200.6 L329.5 202.9" stroke="rgb(48, 34, 23)" stroke-width="0.9" fill="none" opacity="0.40" filter="url(#b05)"/>
<path d="M329.4 106.2 L332.1 111.0 L334.5 116.7 L336.4 122.9 L337.9 129.7 L339.0 136.9 L339.5 144.3 L339.6 151.8 L339.1 159.3 L338.2 166.5 L336.7 173.4 L334.9 179.8 L332.6 185.5 L329.9 190.6 L327.0 194.7 L323.8 198.0 L320.4 200.3 L316.8 201.6 L313.3 201.8 L309.7 200.9 L306.3 199.0" stroke="rgb(62, 46, 33)" stroke-width="1.2" fill="none" opacity="0.48" filter="url(#b05)"/>
<path d="M362.4 95.8 L365.8 102.0 L368.7 108.9 L371.0 116.3 L372.7 124.1 L373.7 132.2 L374.0 140.4 L373.7 148.6 L372.7 156.6 L371.1 164.5 L368.8 171.9 L365.9 178.8 L362.5 185.1 L358.6 190.7 L354.3 195.4 L349.6 199.3 L344.7 202.2 L339.5 204.2 L334.3 205.1 L329.0 205.0 L323.7 203.8" stroke="rgb(49, 35, 23)" stroke-width="1.3" fill="none" opacity="0.40" filter="url(#b05)"/>
<path d="M357.8 89.7 L361.9 95.0 L365.5 101.1 L368.6 107.8 L371.1 115.1 L373.0 122.9 L374.3 130.9 L374.9 139.2 L374.8 147.5 L374.0 155.7 L372.5 163.6 L370.4 171.3 L367.7 178.4 L364.4 185.0 L360.7 190.8 L356.4 195.8 L351.8 200.0 L346.9 203.2 L341.8 205.5 L336.5 206.6 L331.2 206.8" stroke="rgb(210, 190, 158)" stroke-width="1.2" fill="none" opacity="0.67" filter="url(#b05)"/>
<path d="M346.5 81.9 L350.7 85.0 L354.6 89.0 L358.2 93.6 L361.5 98.8 L364.4 104.6 L366.9 111.0 L368.9 117.7 L370.4 124.8 L371.4 132.1 L372.0 139.6 L372.0 147.1 L371.4 154.6 L370.4 161.9 L368.9 169.0 L366.8 175.7 L364.4 182.0 L361.5 187.8 L358.2 193.1 L354.6 197.7 L350.7 201.6" stroke="rgb(53, 39, 27)" stroke-width="0.9" fill="none" opacity="0.43" filter="url(#b05)"/>
<path d="M337.0 110.2 L339.2 115.0 L341.1 120.3 L342.6 126.0 L343.9 132.1 L344.7 138.4 L345.2 144.8 L345.2 151.3 L344.9 157.8 L344.2 164.1 L343.1 170.3 L341.7 176.1 L339.9 181.6 L337.8 186.5 L335.4 191.0 L332.7 194.8 L329.9 198.0 L326.9 200.5 L323.7 202.2 L320.5 203.2 L317.3 203.3" stroke="rgb(43, 31, 20)" stroke-width="1.2" fill="none" opacity="0.37" filter="url(#b05)"/>
<path d="M358.3 100.1 L360.9 105.0 L363.1 110.4 L365.1 116.1 L366.6 122.1 L367.7 128.4 L368.4 134.8 L368.8 141.2 L368.6 147.7 L368.1 154.1 L367.1 160.5 L365.8 166.6 L364.0 172.4 L361.9 178.0 L359.5 183.1 L356.7 187.8 L353.6 192.0 L350.3 195.7 L346.7 198.8 L343.0 201.3 L339.1 203.1" stroke="rgb(50, 36, 24)" stroke-width="0.8" fill="none" opacity="0.41" filter="url(#b05)"/>
<path d="M347.7 88.1 L352.1 92.7 L356.0 98.1 L359.5 104.4 L362.4 111.4 L364.7 118.9 L366.4 126.9 L367.4 135.2 L367.8 143.6 L367.4 152.0 L366.4 160.3 L364.7 168.3 L362.4 175.8 L359.5 182.8 L356.1 189.1 L352.1 194.6 L347.8 199.2 L343.1 202.8 L338.2 205.4 L333.1 206.9 L327.9 207.3" stroke="rgb(190, 171, 140)" stroke-width="1.2" fill="none" opacity="0.59" filter="url(#b05)"/>
<path d="M353.7 100.7 L356.1 105.7 L358.2 111.2 L360.0 116.9 L361.4 123.0 L362.4 129.3 L363.0 135.7 L363.2 142.2 L363.0 148.7 L362.3 155.2 L361.3 161.4 L360.0 167.5 L358.2 173.3 L356.1 178.7 L353.7 183.7 L350.9 188.2 L347.9 192.2 L344.7 195.6 L341.3 198.4 L337.7 200.6 L334.0 202.1" stroke="rgb(178, 159, 129)" stroke-width="0.6" fill="none" opacity="0.54" filter="url(#b05)"/>
<path d="M326.5 101.3 L329.7 104.8 L332.7 109.2 L335.3 114.4 L337.6 120.3 L339.4 126.8 L340.7 133.7 L341.6 140.9 L342.0 148.4 L341.8 155.8 L341.2 163.1 L340.1 170.2 L338.5 176.9 L336.4 183.1 L334.0 188.6 L331.2 193.4 L328.0 197.4 L324.7 200.4 L321.2 202.5 L317.5 203.6 L313.9 203.7" stroke="rgb(57, 42, 29)" stroke-width="1.0" fill="none" opacity="0.45" filter="url(#b05)"/>
<path d="M323.9 93.0 L327.8 95.1 L331.6 98.4 L335.1 102.7 L338.3 108.0 L341.0 114.2 L343.3 121.1 L344.9 128.6 L346.1 136.5 L346.6 144.6 L346.5 152.8 L345.8 160.9 L344.5 168.7 L342.7 176.0 L340.3 182.7 L337.5 188.7 L334.2 193.8 L330.6 197.8 L326.8 200.8 L322.8 202.6 L318.6 203.3" stroke="rgb(173, 154, 124)" stroke-width="1.4" fill="none" opacity="0.52" filter="url(#b05)"/>
<path d="M344.7 99.3 L347.4 103.4 L349.7 107.9 L351.8 112.8 L353.6 118.1 L355.0 123.6 L356.1 129.4 L356.9 135.4 L357.2 141.4 L357.2 147.5 L356.8 153.6 L356.1 159.5 L355.0 165.3 L353.5 170.8 L351.7 176.1 L349.6 181.0 L347.2 185.5 L344.6 189.6 L341.7 193.1 L338.6 196.1 L335.4 198.6" stroke="rgb(169, 151, 121)" stroke-width="1.4" fill="none" opacity="0.51" filter="url(#b05)"/>
<path d="M329.0 97.6 L333.1 101.6 L336.8 106.8 L340.1 113.1 L342.7 120.4 L344.8 128.4 L346.1 136.9 L346.7 145.8 L346.6 154.7 L345.7 163.5 L344.1 171.9 L341.9 179.7 L339.0 186.6 L335.6 192.6 L331.7 197.4 L327.5 200.9 L323.0 203.0 L318.4 203.6 L313.9 202.9 L309.4 200.6 L305.2 197.1" stroke="rgb(59, 44, 30)" stroke-width="0.6" fill="none" opacity="0.46" filter="url(#b05)"/>
<path d="M372.9 72.5 L375.7 78.2 L378.1 84.3 L380.1 90.7 L381.7 97.2 L382.9 103.9 L383.7 110.8 L384.0 117.7 L384.0 124.6 L383.4 131.4 L382.5 138.2 L381.2 144.9 L379.4 151.4 L377.2 157.6 L374.7 163.6 L371.8 169.3 L368.6 174.6 L365.0 179.5 L361.2 183.9 L357.1 187.9 L352.7 191.4" stroke="#a8987a" stroke-width=".6" fill="none" opacity=".35"/>
<path d="M376.5 103.8 L377.2 109.1 L377.7 114.4 L378.0 119.8 L378.2 125.2 L378.2 130.6 L377.9 136.0 L377.5 141.4 L377.0 146.7 L376.2 152.0 L375.3 157.1 L374.2 162.2 L372.9 167.1 L371.5 171.9 L369.9 176.5 L368.1 180.9 L366.3 185.1 L364.2 189.2 L362.1 193.0 L359.8 196.5 L357.4 199.8" stroke="#a8987a" stroke-width=".6" fill="none" opacity=".35"/>
<path d="M393.9 85.3 L396.3 91.1 L398.4 97.2 L400.0 103.4 L401.2 109.8 L402.0 116.3 L402.3 122.8 L402.2 129.3 L401.6 135.8 L400.6 142.2 L399.2 148.5 L397.3 154.6 L395.0 160.6 L392.4 166.3 L389.3 171.7 L385.9 176.8 L382.2 181.6 L378.1 186.0 L373.8 190.0 L369.2 193.6 L364.4 196.7" stroke="#a8987a" stroke-width=".6" fill="none" opacity=".35"/>
<path d="M383.6 77.8 L385.7 83.1 L387.5 88.6 L389.0 94.3 L390.2 100.1 L391.2 106.0 L391.8 112.0 L392.1 118.1 L392.2 124.2 L391.9 130.2 L391.3 136.3 L390.5 142.2 L389.3 148.0 L387.9 153.7 L386.1 159.3 L384.1 164.6 L381.9 169.7 L379.3 174.6 L376.6 179.1 L373.6 183.4 L370.5 187.4" stroke="#a8987a" stroke-width=".6" fill="none" opacity=".35"/>
<path d="M373.0 76.3 L375.2 82.8 L377.2 89.6 L378.8 96.6 L380.0 103.8 L381.0 111.1 L381.5 118.6 L381.7 126.1 L381.6 133.6 L381.1 141.0 L380.2 148.4 L379.0 155.6 L377.5 162.7 L375.6 169.5 L373.4 176.0 L370.9 182.2 L368.1 188.1 L365.0 193.6 L361.7 198.6 L358.2 203.2 L354.5 207.3" stroke="#a8987a" stroke-width=".6" fill="none" opacity=".35"/>
<path d="M386.0 91.9 L386.9 99.3 L387.4 106.8 L387.6 114.3 L387.4 121.8 L386.8 129.3 L385.8 136.7 L384.5 144.0 L382.9 151.0 L380.9 157.8 L378.6 164.3 L376.0 170.5 L373.0 176.4 L369.8 181.8 L366.4 186.8 L362.7 191.3 L358.8 195.3 L354.7 198.8 L350.5 201.8 L346.1 204.2 L341.6 206.0" stroke="#a8987a" stroke-width=".6" fill="none" opacity=".35"/>
<path d="M396.6 101.1 L397.8 106.2 L398.8 111.3 L399.5 116.5 L399.9 121.7 L400.1 127.0 L400.1 132.2 L399.7 137.5 L399.2 142.7 L398.3 147.8 L397.2 152.9 L395.9 157.9 L394.3 162.8 L392.5 167.5 L390.5 172.2 L388.2 176.6 L385.8 180.9 L383.1 184.9 L380.2 188.8 L377.2 192.4 L373.9 195.8" stroke="#a8987a" stroke-width=".6" fill="none" opacity=".35"/>
<ellipse cx="318" cy="150" rx="14" ry="30" fill="#17100b" opacity=".85" filter="url(#b4)"/>
<path d="M300 117L326 117C318 135 312 160 311 185L300 185Z" fill="#1a120d" opacity=".6" filter="url(#b4)"/>
<path d="M305 222C340 212 375 218 400 238" stroke="#3e2e22" stroke-width="22" fill="none" opacity=".75" filter="url(#b4)"/>
<path d="M308 205.9C330 199.9 358.0 216.5 378.0 230.5" stroke="rgb(96, 74, 56)" stroke-width="1.1" fill="none" opacity=".6" filter="url(#b1)"/>
<path d="M308 205.0C330 199.0 377.1 201.8 397.1 215.8" stroke="rgb(88, 67, 51)" stroke-width="1.1" fill="none" opacity=".6" filter="url(#b1)"/>
<path d="M308 207.8C330 201.8 369.6 223.3 389.6 237.3" stroke="rgb(78, 59, 44)" stroke-width="1.5" fill="none" opacity=".6" filter="url(#b1)"/>
<path d="M308 209.6C330 203.6 362.3 212.3 382.3 226.3" stroke="rgb(74, 55, 41)" stroke-width="1.0" fill="none" opacity=".6" filter="url(#b1)"/>
<path d="M308 211.0C330 205.0 376.2 216.0 396.2 230.0" stroke="rgb(76, 57, 43)" stroke-width="1.7" fill="none" opacity=".6" filter="url(#b1)"/>
<path d="M308 216.0C330 210.0 358.0 213.1 378.0 227.1" stroke="rgb(75, 56, 42)" stroke-width="0.9" fill="none" opacity=".6" filter="url(#b1)"/>
<path d="M308 215.2C330 209.2 343.6 214.4 363.6 228.4" stroke="rgb(78, 59, 44)" stroke-width="1.4" fill="none" opacity=".6" filter="url(#b1)"/>
<path d="M308 219.1C330 213.1 370.0 222.2 390.0 236.2" stroke="rgb(85, 65, 49)" stroke-width="1.3" fill="none" opacity=".6" filter="url(#b1)"/>
<path d="M308 218.9C330 212.9 353.5 214.3 373.5 228.3" stroke="rgb(79, 60, 44)" stroke-width="1.8" fill="none" opacity=".6" filter="url(#b1)"/>
<path d="M308 219.7C330 213.7 360.1 227.6 380.1 241.6" stroke="rgb(107, 83, 63)" stroke-width="1.0" fill="none" opacity=".6" filter="url(#b1)"/>
<path d="M308 222.1C330 216.1 349.9 224.9 369.9 238.9" stroke="rgb(87, 66, 50)" stroke-width="1.8" fill="none" opacity=".6" filter="url(#b1)"/>
<path d="M308 226.2C330 220.2 374.9 220.7 394.9 234.7" stroke="rgb(67, 50, 37)" stroke-width="1.5" fill="none" opacity=".6" filter="url(#b1)"/>
<path d="M308 228.2C330 222.2 358.9 235.1 378.9 249.1" stroke="rgb(66, 49, 36)" stroke-width="1.2" fill="none" opacity=".6" filter="url(#b1)"/>
<path d="M308 230.1C330 224.1 373.0 242.9 393.0 256.9" stroke="rgb(112, 87, 67)" stroke-width="1.0" fill="none" opacity=".6" filter="url(#b1)"/>
<path d="M308 228.6C330 222.6 346.2 234.1 366.2 248.1" stroke="rgb(98, 76, 57)" stroke-width="1.7" fill="none" opacity=".6" filter="url(#b1)"/>
<path d="M308 232.9C330 226.9 365.9 243.7 385.9 257.7" stroke="rgb(87, 67, 50)" stroke-width="1.4" fill="none" opacity=".6" filter="url(#b1)"/>
<path d="M308 232.0C330 226.0 371.3 231.1 391.3 245.1" stroke="rgb(110, 85, 65)" stroke-width="1.4" fill="none" opacity=".6" filter="url(#b1)"/>
<path d="M308 234.8C330 228.8 345.1 234.4 365.1 248.4" stroke="rgb(96, 74, 56)" stroke-width="1.5" fill="none" opacity=".6" filter="url(#b1)"/>
<path d="M308 235.8C330 229.8 342.8 241.4 362.8 255.4" stroke="rgb(93, 72, 54)" stroke-width="1.2" fill="none" opacity=".6" filter="url(#b1)"/>
<path d="M308 238.1C330 232.1 364.0 232.3 384.0 246.3" stroke="rgb(80, 61, 45)" stroke-width="1.3" fill="none" opacity=".6" filter="url(#b1)"/>
<path d="M308 242.8C330 236.8 365.8 256.3 385.8 270.3" stroke="rgb(88, 68, 51)" stroke-width="1.0" fill="none" opacity=".6" filter="url(#b1)"/>
<path d="M308 241.8C330 235.8 378.4 251.3 398.4 265.3" stroke="rgb(80, 61, 45)" stroke-width="0.8" fill="none" opacity=".6" filter="url(#b1)"/>
<path d="M308 244.6C330 238.6 367.0 247.8 387.0 261.8" stroke="rgb(78, 59, 44)" stroke-width="1.5" fill="none" opacity=".6" filter="url(#b1)"/>
<path d="M308 248.1C330 242.1 349.1 242.9 369.1 256.9" stroke="rgb(82, 62, 46)" stroke-width="1.2" fill="none" opacity=".6" filter="url(#b1)"/>
<path d="M308 248.9C330 242.9 347.9 260.5 367.9 274.5" stroke="rgb(101, 78, 59)" stroke-width="1.3" fill="none" opacity=".6" filter="url(#b1)"/>
<path d="M308 248.8C330 242.8 378.8 249.7 398.8 263.7" stroke="rgb(105, 81, 62)" stroke-width="1.0" fill="none" opacity=".6" filter="url(#b1)"/>
<path d="M305 236C330 226 360 236 386 262" stroke="#2a1c15" stroke-width="5" fill="none" opacity=".6" filter="url(#b2)"/>
<path d="M309 278C316 275 325 277 332 282" stroke="#5e4032" stroke-width="2.600" fill="none" opacity=".8" filter="url(#b1)"/>
<path d="M308 294C315 293 321 297 325 302C320 306 314 308 308 307Z" fill="#2e1a15" opacity=".9" filter="url(#b2)"/>
<path d="M386.500 305C389.500 305 390 311 388 316.500" stroke="#d0d0d0" stroke-width="1.700" fill="none"/>
<circle cx="387" cy="323.500" r="4" fill="#d8d8d0" opacity=".75" filter="url(#b1)"/>
<circle cx="387" cy="323.500" r="1.800" fill="#fff"/>
</svg>
</div>
<!-- below panel -->
<div class="abs" style="left:588.300px;top:451px;width:15px;height:50px;background:#f0f0f0;border-left:1px solid #c8c8c8"></div>
<div class="abs" style="left:603.300px;top:451px;width:1px;height:50px;background:#2e2e2e"></div>
<div class="abs" style="left:604.300px;top:451px;width:2.700px;height:50px;background:#d8d8d8"></div>

<div id="panel" class="abs">
<div id="phead" class="abs"></div>
<div id="ptabs" class="abs">
 <div class="ptab on" style="left:1px;width:40px"></div>
 <div class="ptab" style="left:41px;width:51px"></div>
 <div class="ptab" style="left:92px;width:58px"></div>
</div>
<div class="t" id="pt0" style="left:8.4px;top:16.1px;font-weight:bold;color:#2e2e2e;font-size:9.5px;letter-spacing:-0.205px">Слои</div>
<div class="t" id="pt1" style="left:47.5px;top:16.1px;font-weight:bold;color:#2e2e2e;font-size:9.5px;letter-spacing:-0.013px">Каналы</div>
<div class="t" id="pt2" style="left:99.4px;top:16.1px;font-weight:bold;color:#2e2e2e;font-size:9.5px;letter-spacing:0.113px">Контуры</div>
<!-- blend select -->
<div class="abs" style="left:5.7px;top:33.700px;width:194px;height:17.200px;background:#fff;box-shadow:0 0 0 1px rgba(150,150,160,.3);border-radius:1px"></div>
<div class="t" id="pb0" style="left:9.3px;top:36.8px;letter-spacing:-0.098px">Обычные</div>
<div class="dd" style="left:189.300px;top:41.500px;border-top-width:4.500px;border-left-width:3.700px;border-right-width:3.700px"></div>
<div class="t" id="pb1" style="left:204.5px;top:36.8px;letter-spacing:0.158px">Непрозрачность</div>
<div class="hl" style="top:54px"></div>
<div class="t" id="pb2" style="left:8.8px;top:61.7px;letter-spacing:0.293px">Закрепить:</div>
<div class="t" id="pb3" style="left:244.5px;top:61.7px;letter-spacing:-0.071px">Заливка</div>
<!-- lock icons -->
<svg style="left:69px;top:62px" width="12" height="12"><rect x="0.5" y="0.5" width="10" height="10" fill="#fff" stroke="#555"/><rect x="1" y="1" width="3" height="3" fill="#bbb"/><rect x="7" y="1" width="3" height="3" fill="#bbb"/><rect x="4" y="4" width="3" height="3" fill="#bbb"/><rect x="1" y="7" width="3" height="3" fill="#bbb"/><rect x="7" y="7" width="3" height="3" fill="#bbb"/></svg>
<svg style="left:86px;top:62px" width="14" height="13"><path d="M13 0.5L6 7.5" stroke="#444" stroke-width="1.6"/><path d="M6.5 6.5C4 6.5 3.5 9 1 11C4 12 7.5 11 7.5 7.5Z" fill="#333"/></svg>
<svg style="left:104.8px;top:62px" width="13" height="13"><path d="M6 1V11M1 6H11" stroke="#222" stroke-width="1.3"/><path d="M6 0L8 2.5H4ZM6 12L8 9.5H4ZM0 6L2.5 4V8ZM12 6L9.5 4V8Z" fill="#222"/></svg>
<svg style="left:124px;top:62.8px" width="10" height="11"><path d="M2.5 5V3.5A2.5 2.5 0 0 1 7.5 3.5V5" fill="none" stroke="#333" stroke-width="1.5"/><rect x="0.5" y="4.5" width="8.5" height="5.5" fill="#333"/><rect x="2" y="6.5" width="5.5" height="1" fill="#999"/></svg>
<div class="hl" style="top:80px"></div>
<!-- eye column -->
<div class="abs" style="left:1px;top:81px;width:25px;height:131px;background:#d4d4d4;border-right:1px solid #9a9a9a"></div>
<div class="hl" style="top:103px"></div>
<div class="hl" style="top:126px"></div>
<div class="hl" style="top:148px"></div>
<div class="hl" style="top:212px"></div>
<svg width="0" height="0"><defs><filter id="tb"><feGaussianBlur stdDeviation=".45"/></filter><filter id="tb2"><feGaussianBlur stdDeviation="3"/></filter></defs></svg>
<svg width="0" height="0"><defs><linearGradient id="fg" x1="0" y1="0" x2="0" y2="1"><stop offset="0" stop-color="#e2e2e2"/><stop offset="1" stop-color="#b4b4b4"/></linearGradient></defs></svg>
<div class="eye" style="top:84.0px;left:6px"></div><svg style="left:8px;top:87.5px" width="13" height="9"><path d="M0.5 4.5C3 0.8 9.5 0.8 12 4.5C9.5 8 3 8 0.5 4.5Z" fill="#ececec" stroke="#222" stroke-width="1.1"/><circle cx="6.2" cy="4.4" r="2.6" fill="#111"/><circle cx="5.4" cy="3.6" r=".8" fill="#ddd"/><path d="M0.3 3.4C3 -0.4 9.5 -0.4 12.2 3.4" fill="none" stroke="#333" stroke-width=".9"/></svg>
<svg style="left:32px;top:86.3px" width="7" height="11"><path d="M0.6 0.8L5.8 5.4L0.6 10Z" fill="#b9b9f2" stroke="#17175a" stroke-width="1.1"/></svg>
<svg style="left:47.3px;top:86.1px" width="16" height="12"><path d="M0.5 10.5V1.5Q0.5 0.5 1.5 0.5H5L6.5 2H13.5Q14.5 2 14.5 3V10.5Z" fill="url(#fg)" stroke="#8a8a8a" stroke-width="1"/><path d="M0 11.2H15" stroke="#555" stroke-width="1.2"/></svg>
<div class="t" id="ln0" style="left:74.9px;top:87.6px;letter-spacing:0.022px">Звездочка</div>
<div class="eye" style="top:107.1px;left:6px"></div><svg style="left:8px;top:110.6px" width="13" height="9"><path d="M0.5 4.5C3 0.8 9.5 0.8 12 4.5C9.5 8 3 8 0.5 4.5Z" fill="#ececec" stroke="#222" stroke-width="1.1"/><circle cx="6.2" cy="4.4" r="2.6" fill="#111"/><circle cx="5.4" cy="3.6" r=".8" fill="#ddd"/><path d="M0.3 3.4C3 -0.4 9.5 -0.4 12.2 3.4" fill="none" stroke="#333" stroke-width=".9"/></svg>
<svg style="left:32px;top:109.39999999999999px" width="7" height="11"><path d="M0.6 0.8L5.8 5.4L0.6 10Z" fill="#b9b9f2" stroke="#17175a" stroke-width="1.1"/></svg>
<svg style="left:47.3px;top:109.19999999999999px" width="16" height="12"><path d="M0.5 10.5V1.5Q0.5 0.5 1.5 0.5H5L6.5 2H13.5Q14.5 2 14.5 3V10.5Z" fill="url(#fg)" stroke="#8a8a8a" stroke-width="1"/><path d="M0 11.2H15" stroke="#555" stroke-width="1.2"/></svg>
<div class="t" id="ln1" style="left:74.9px;top:110.69999999999999px;letter-spacing:0.268px">Рука</div>
<div class="eye" style="top:130.0px;left:6px"></div><svg style="left:8px;top:133.5px" width="13" height="9"><path d="M0.5 4.5C3 0.8 9.5 0.8 12 4.5C9.5 8 3 8 0.5 4.5Z" fill="#ececec" stroke="#222" stroke-width="1.1"/><circle cx="6.2" cy="4.4" r="2.6" fill="#111"/><circle cx="5.4" cy="3.6" r=".8" fill="#ddd"/><path d="M0.3 3.4C3 -0.4 9.5 -0.4 12.2 3.4" fill="none" stroke="#333" stroke-width=".9"/></svg>
<svg style="left:32px;top:132.3px" width="7" height="11"><path d="M0.6 0.8L5.8 5.4L0.6 10Z" fill="#b9b9f2" stroke="#17175a" stroke-width="1.1"/></svg>
<svg style="left:47.3px;top:132.1px" width="16" height="12"><path d="M0.5 10.5V1.5Q0.5 0.5 1.5 0.5H5L6.5 2H13.5Q14.5 2 14.5 3V10.5Z" fill="url(#fg)" stroke="#8a8a8a" stroke-width="1"/><path d="M0 11.2H15" stroke="#555" stroke-width="1.2"/></svg>
<div class="t" id="ln2" style="left:74.9px;top:133.6px;letter-spacing:0.332px">Открытые глаза</div>
<div class="eye" style="top:157px;left:6px"></div><svg style="left:8px;top:160.5px" width="13" height="9"><path d="M0.5 4.5C3 0.8 9.5 0.8 12 4.5C9.5 8 3 8 0.5 4.5Z" fill="#ececec" stroke="#222" stroke-width="1.1"/><circle cx="6.2" cy="4.4" r="2.6" fill="#111"/><circle cx="5.4" cy="3.6" r=".8" fill="#ddd"/><path d="M0.3 3.4C3 -0.4 9.5 -0.4 12.2 3.4" fill="none" stroke="#333" stroke-width=".9"/></svg>
<div class="eye" style="top:188.3px;left:6px"></div><svg style="left:8px;top:191.8px" width="13" height="9"><path d="M0.5 4.5C3 0.8 9.5 0.8 12 4.5C9.5 8 3 8 0.5 4.5Z" fill="#ececec" stroke="#222" stroke-width="1.1"/><circle cx="6.2" cy="4.4" r="2.6" fill="#111"/><circle cx="5.4" cy="3.6" r=".8" fill="#ddd"/><path d="M0.3 3.4C3 -0.4 9.5 -0.4 12.2 3.4" fill="none" stroke="#333" stroke-width=".9"/></svg>
<!-- selected row -->
<div class="abs" style="left:26px;top:148px;width:230px;height:36px;background:#3399ff"></div>
<svg style="left:26.5px;top:151px" width="37" height="28"><path d="M0.800 5V0.700H6M31 0.700H36V5M36 22.500V27.100H31M6 27.100H0.800V22.500" fill="none" stroke="#111" stroke-width="1"/><rect x="1.800" y="1.700" width="33.200" height="24.400" fill="none" stroke="#fff" stroke-width="1.200"/></svg>
<div class="abs thumb" style="left:29.900px;top:153.700px;width:30.600px;height:22.300px;overflow:hidden;box-shadow:0 0 0 1px #111"><svg style="left:0;top:0" width="100%" height="100%" viewBox="0 0 31 22" preserveAspectRatio="none"><rect width="31" height="22" fill="#2a2a22"/><ellipse cx="14" cy="10" rx="14" ry="11" fill="#4c4c3f" filter="url(#tb2)"/><g filter="url(#tb)"><path d="M10.500 22L10.300 14.500C10.300 12.500 12 12 13.500 13L14 22Z" fill="#a8825a"/><path d="M20 13C24 13 28.500 14.500 29.500 17.500L29.500 22H19Z" fill="#86643f"/><path d="M13 3C15 0.500 20 0.500 22 3C23.500 6 23 10 21 12C19 13.500 16.500 12.500 15.500 10.500C14 12.500 12 12.500 10.500 11.500C11 8.500 11.500 5 13 3Z" fill="#b8965e"/><path d="M16.500 4.500C19 3.500 21.500 5.500 21.500 8C21.500 11 20 12.500 18.300 12.500C16.500 12 15.500 9.500 15.500 7.500Z" fill="#d4ae8c"/><path d="M15 6.300C16.300 5.800 17.300 6.800 17.300 8.200C16.500 8.700 15.500 8.700 15 8.200Z" fill="#241812"/><path d="M18 9.500L19.500 9.500L19 11L18 10.500Z" fill="#7a4a3a"/><path d="M14.300 12.500C16 13.500 19 13.500 20.500 13C20.800 16 20 20 19.500 22H14.300C13.800 18 13.800 15 14.300 12.500Z" fill="#b08c54"/><path d="M16 14L17 22M18.500 14L18.500 22" stroke="#7a5c34" stroke-width=".6"/><path d="M8.600 18.800H12.600V20.400H8.600Z" fill="#0a0a0a"/><path d="M20.500 2.500C23 1.500 24.500 3.500 23.500 6" stroke="#241a12" stroke-width="1.600" fill="none"/><path d="M20 12.500L21.500 13.500" stroke="#111" stroke-width=".8"/></g></svg>
</div>
<div class="abs thumb" style="left:29.900px;top:185.700px;width:30.600px;height:21.800px;overflow:hidden;box-shadow:0 0 0 1px #111"><svg style="left:0;top:0" width="100%" height="100%" viewBox="0 0 31 22" preserveAspectRatio="none"><rect width="31" height="22" fill="#2a2a22"/><ellipse cx="14" cy="10" rx="14" ry="11" fill="#4c4c3f" filter="url(#tb2)"/><g filter="url(#tb)"><path d="M10.500 22L10.300 14.500C10.300 12.500 12 12 13.500 13L14 22Z" fill="#a8825a"/><path d="M20 13C24 13 28.500 14.500 29.500 17.500L29.500 22H19Z" fill="#86643f"/><path d="M13 3C15 0.500 20 0.500 22 3C23.500 6 23 10 21 12C19 13.500 16.500 12.500 15.500 10.500C14 12.500 12 12.500 10.500 11.500C11 8.500 11.500 5 13 3Z" fill="#b8965e"/><path d="M16.500 4.500C19 3.500 21.500 5.500 21.500 8C21.500 11 20 12.500 18.300 12.500C16.500 12 15.500 9.500 15.500 7.500Z" fill="#d4ae8c"/><path d="M15 6.300C16.300 5.800 17.300 6.800 17.300 8.200C16.500 8.700 15.500 8.700 15 8.200Z" fill="#241812"/><path d="M18 9.500L19.500 9.500L19 11L18 10.500Z" fill="#7a4a3a"/><path d="M14.300 12.500C16 13.500 19 13.500 20.500 13C20.800 16 20 20 19.500 22H14.300C13.800 18 13.800 15 14.300 12.500Z" fill="#b08c54"/><path d="M16 14L17 22M18.500 14L18.500 22" stroke="#7a5c34" stroke-width=".6"/><path d="M8.600 18.800H12.600V20.400H8.600Z" fill="#0a0a0a"/><path d="M20.500 2.500C23 1.500 24.500 3.500 23.500 6" stroke="#241a12" stroke-width="1.600" fill="none"/><path d="M20 12.500L21.500 13.500" stroke="#111" stroke-width=".8"/></g></svg>
</div>
<div class="t" id="ln3" style="left:69.4px;top:160.7px;font-weight:bold;color:#fff;letter-spacing:0.181px">Фон копия 7</div>
<div class="t" id="ln4" style="left:70.3px;top:192px;font-style:italic;color:#111;letter-spacing:0.128px">Фон</div>
<!-- bottom bar -->
<div class="hl" style="top:385px"></div>
<svg style="left:145px;top:388.5px" width="20" height="10"><rect x="1" y="1.5" width="9" height="5" rx="2.5" fill="none" stroke="#6a6a6a" stroke-width="1.6"/><rect x="9" y="1.5" width="9" height="5" rx="2.5" fill="none" stroke="#6a6a6a" stroke-width="1.6"/><path d="M6 4H13" stroke="#999" stroke-width="1.5"/></svg>
<div class="t" style="left:175px;top:384.5px;font-family:'Liberation Serif',serif;font-style:italic;font-weight:bold;font-size:14px;line-height:16px;color:#333;letter-spacing:-0.5px">fx</div>
<div class="dd" style="left:189px;top:397px;border-top-width:2.5px;border-left-width:2px;border-right-width:2px"></div>
<svg style="left:202.2px;top:387.5px" width="15" height="12"><rect x="0.5" y="0.5" width="13" height="10.5" fill="#999" stroke="#333"/><circle cx="7" cy="5.7" r="3.3" fill="#fff"/></svg>
<svg style="left:230px;top:387.5px" width="18" height="13"><circle cx="6" cy="5.7" r="5.2" fill="#eee" stroke="#555"/><path d="M9.7 2A5.2 5.2 0 0 0 2.3 9.4Z" fill="#333"/><path d="M13 9.5H17L15 12Z" fill="#222"/></svg>
<div class="abs" style="left:0;top:12px;width:1px;height:400px;background:#5a5a5a"></div>
</div>

<!-- red marks in panel area -->
<div class="abs" style="left:588px;top:192px;width:270px;height:38px;border:5px solid #ed1c24"></div>
<svg style="left:0;top:0" width="843" height="501"><path d="M769.3 206.3L731 243.8" stroke="#ed1c24" stroke-width="4.500" stroke-linecap="round"/></svg>

<div id="menu" class="abs">
<div class="mi" id="mi0" style="left:19.5px;top:3.0px;color:#000;letter-spacing:0.091px">Новый</div>
<div class="arr" style="top:6.5px"></div>
<div class="mi" id="mi1" style="left:19.5px;top:21.0px;color:#000;letter-spacing:-0.216px">Создать дубликат слоя...</div>
<div class="mi" id="mi2" style="left:19.5px;top:41.0px;color:#000;letter-spacing:-0.333px">Удалить</div>
<div class="arr" style="top:44.5px"></div>
<div class="mi" id="mi3" style="left:19.5px;top:68.0px;color:#000;letter-spacing:-0.154px">Параметры слоя...</div>
<div class="mi" id="mi4" style="left:19.5px;top:88.0px;color:#000;letter-spacing:-0.277px">Стиль слоя</div>
<div class="arr" style="top:91.5px"></div>
<div class="mi" id="mi5" style="left:19.5px;top:106.5px;color:#787878;letter-spacing:-0.005px">Смарт-фильтр</div>
<div class="arr d" style="top:110.0px"></div>
<div class="mi" id="mi6" style="left:19.5px;top:135.0px;color:#000;letter-spacing:0.009px">Новый слой-заливка</div>
<div class="arr" style="top:138.5px"></div>
<div class="mi" id="mi7" style="left:19.5px;top:154.0px;color:#000;letter-spacing:0.191px">Новый корректирующий слой</div>
<div class="arr" style="top:157.5px"></div>
<div class="mi" id="mi8" style="left:19.5px;top:172.0px;color:#787878;letter-spacing:0.025px">Параметры содержимого слоя...</div>
<div class="mi" id="mi9" style="left:19.5px;top:200.5px;color:#000;letter-spacing:0.020px">Слой-маска</div>
<div class="arr" style="top:204.0px"></div>
<div class="mi" id="mi10" style="left:19.5px;top:219.0px;color:#000;letter-spacing:-0.168px">Векторная маска</div>
<div class="arr" style="top:222.5px"></div>
<div class="mi" id="mi11" style="left:19.5px;top:238.0px;color:#000;letter-spacing:-0.040px">Создать обтравочную маску</div>
<div class="mi" id="sc11" style="left:212.2px;top:238.0px;color:#000;letter-spacing:0.148px">Alt+Ctrl+G</div>
<div class="mi" id="mi12" style="left:19.5px;top:267.0px;color:#000;letter-spacing:0.025px">Смарт-объект</div>
<div class="arr" style="top:270.5px"></div>
<div class="mi" id="mi13" style="left:19.5px;top:286.0px;color:#000;letter-spacing:-0.195px">Слои видео</div>
<div class="arr" style="top:289.5px"></div>
<div class="mi" id="mi14" style="left:19.5px;top:305.0px;color:#787878;letter-spacing:-0.102px">Шрифты</div>
<div class="arr d" style="top:308.5px"></div>
<div class="mi" id="mi15" style="left:19.5px;top:324.0px;color:#787878;letter-spacing:-0.159px">Растрировать</div>
<div class="arr d" style="top:327.5px"></div>
<div class="mi" id="mi16" style="left:19.5px;top:351.0px;color:#000;letter-spacing:-0.077px">Новый фрагмент из слоя</div>
<div class="mi" id="mi17" style="left:19.5px;top:378.5px;color:#000;letter-spacing:0.062px">Сгруппировать слои</div>
<div class="mi" id="sc17" style="left:235.2px;top:378.5px;color:#000;letter-spacing:-0.086px">Ctrl+G</div>
<div class="mi" id="mi18" style="left:19.5px;top:397.5px;color:#787878;letter-spacing:-0.018px">Разгруппировать слои</div>
<div class="mi" id="sc18" style="left:203.2px;top:397.5px;color:#787878;letter-spacing:0.039px">Shift+Ctrl+G</div>
<div class="mi" id="mi19" style="left:19.5px;top:416.5px;color:#000;letter-spacing:-0.028px">Скрыть слои</div>
<div class="sep" style="top:61.0px"></div>
<div class="sep" style="top:127.0px"></div>
<div class="sep" style="top:193.5px"></div>
<div class="sep" style="top:259.0px"></div>
<div class="sep" style="top:344.0px"></div>
<div class="sep" style="top:372.5px"></div>
</div>
<!-- submenu -->
<div class="abs" style="left:307px;top:468px;width:215px;height:40px;background:#f0f0f0;border:1px solid #979797;box-shadow:2px 2px 2px rgba(0,0,0,.4)"></div>
<div class="abs" style="left:310px;top:471px;width:209px;height:19px;background:#3399ff"></div>
<div class="mi" id="sm0" style="left:325.5px;top:471px;color:#fff;line-height:19px;letter-spacing:-0.101px">На передний план</div>
<div class="mi" id="sm1" style="left:440.5px;top:471px;color:#fff;line-height:19px;letter-spacing:0.331px">Shift+Ctrl+]</div>
<div class="mi" id="sm2" style="left:325.5px;top:490px;line-height:19px;letter-spacing:-0.140px">Переложить вперед</div>
<div class="mi" id="sm3" style="left:472.5px;top:490px;line-height:19px;letter-spacing:0.497px">Ctrl+]</div>
<!-- main highlighted item -->
<div class="abs" style="left:24px;top:471px;width:284px;height:18.500px;background:#3399ff"></div>
<div class="mi" id="mi20" style="left:41.500px;top:472.500px;color:#fff;line-height:19px;letter-spacing:0.053px">Упорядочить</div>
<div class="arr" style="left:297px;top:477px;border-left-color:#fff"></div>
<!-- red markers -->
<div class="abs" style="left:17px;top:5px;width:51px;height:25px;border:5px solid #ed1c24"></div>
<div class="abs" style="left:19.300px;top:463.800px;width:503.700px;height:30px;border:5px solid #ed1c24"></div>
</body></html>
